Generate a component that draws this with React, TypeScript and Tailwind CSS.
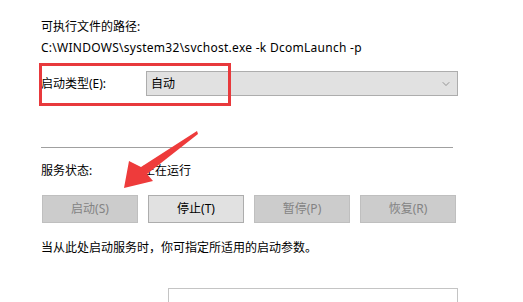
import { ChevronDown } from 'lucide-react'

const buttons = [
  { label: '启动(S)', disabled: true },
  { label: '停止(T)', disabled: false },
  { label: '暂停(P)', disabled: true },
  { label: '恢复(R)', disabled: true },
]

export default function App() {
  return (
    <div
      className="relative h-[302px] w-[523px] overflow-hidden bg-white pl-[41px] pt-[19px] text-[12px] text-black"
      style={{ fontFamily: '"Segoe UI", "Noto Sans", "Noto Sans CJK SC", sans-serif' }}
    >
      <div className="h-4 leading-4">可执行文件的路径:</div>
      <div className="mt-[5px] h-4 leading-4 tracking-[0.27px]">C:\WINDOWS\system32\svchost.exe -k DcomLaunch -p</div>

      <div className="mt-[15px] flex items-center">
        <div className="w-[105px] leading-4">启动类型(E):</div>
        <div className="flex h-[25px] w-[312px] items-center justify-between border border-[#adadad] bg-[#e1e1e1] pl-[4px] pr-[5px]">
          <span className="leading-4">自动</span>
          <ChevronDown className="h-[12px] w-[12px] text-[#606060]" strokeWidth={1.2} />
        </div>
      </div>

      <div className="mt-[51px] h-px w-[412px] bg-[#a0a0a0]" />

      <div className="mt-[15px] flex h-4 leading-4">
        <div className="w-[102px]">服务状态:</div>
        <div>正在运行</div>
      </div>

      <div className="ml-px mt-[16px] flex gap-[10px]">
        {buttons.map((b) => (
          <div
            key={b.label}
            className={
              b.disabled
                ? 'flex h-[28px] w-[96px] items-center justify-center border border-[#bfbfbf] bg-[#cccccc] text-[#838383]'
                : 'flex h-[28px] w-[96px] items-center justify-center border border-[#adadad] bg-[#e1e1e1] text-black'
            }
          >
            {b.label}
          </div>
        ))}
      </div>

      <div className="mt-[17px] h-4 leading-4">当从此处启动服务时，你可指定所适用的启动参数。</div>

      <div className="ml-[127px] mt-[32px] h-[30px] w-[290px] border border-[#c4c4c4] bg-white" />

      {/* annotation: red frame */}
      <div className="pointer-events-none absolute left-[39px] top-[63px] h-[43px] w-[192px] border-[3px] border-[#e8393c]" />

      {/* annotation: red arrow */}
      <svg className="pointer-events-none absolute left-0 top-0" width="523" height="302" viewBox="0 0 523 302">
        <polygon
          points="197,131 198,134 147,174 153,181 124,188 129,161 141,167"
          fill="#ee3b3b"
        />
      </svg>
    </div>
  )
}
